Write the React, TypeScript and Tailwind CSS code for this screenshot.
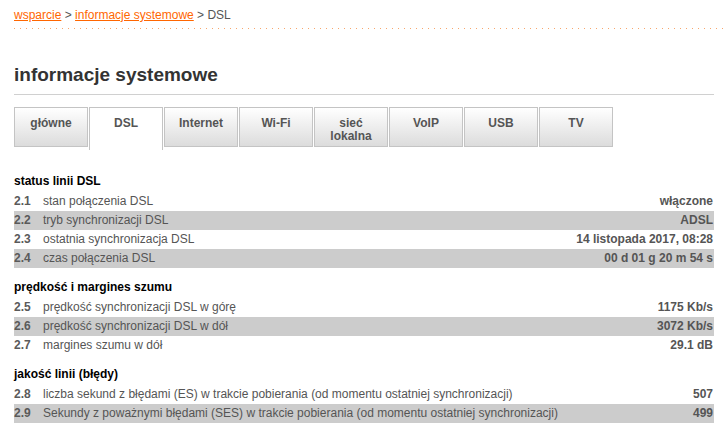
import React from 'react';

type Row = { num: string; label: string; value: string };

const sections: { title: string; rows: Row[] }[] = [
  {
    title: 'status linii DSL',
    rows: [
      { num: '2.1', label: 'stan połączenia DSL', value: 'włączone' },
      { num: '2.2', label: 'tryb synchronizacji DSL', value: 'ADSL' },
      { num: '2.3', label: 'ostatnia synchronizacja DSL', value: '14 listopada 2017, 08:28' },
      { num: '2.4', label: 'czas połączenia DSL', value: '00 d 01 g 20 m 54 s' },
    ],
  },
  {
    title: 'prędkość i margines szumu',
    rows: [
      { num: '2.5', label: 'prędkość synchronizacji DSL w górę', value: '1175 Kb/s' },
      { num: '2.6', label: 'prędkość synchronizacji DSL w dół', value: '3072 Kb/s' },
      { num: '2.7', label: 'margines szumu w dół', value: '29.1 dB' },
    ],
  },
  {
    title: 'jakość linii (błędy)',
    rows: [
      {
        num: '2.8',
        label: 'liczba sekund z błędami (ES) w trakcie pobierania (od momentu ostatniej synchronizacji)',
        value: '507',
      },
      {
        num: '2.9',
        label: 'Sekundy z poważnymi błędami (SES) w trakcie pobierania (od momentu ostatniej synchronizacji)',
        value: '499',
      },
    ],
  },
];

const tabs = ['główne', 'DSL', 'Internet', 'Wi-Fi', 'sieć lokalna', 'VoIP', 'USB', 'TV'];

export default function App() {
  return (
    <div className="w-[728px] h-[432px] overflow-hidden bg-white px-[14px] text-[12px] text-[#555] font-['Liberation_Sans',Arial,sans-serif]">
      {/* breadcrumb */}
      <div className="pt-[8px] leading-[14px]">
        <a href="#" className="text-[#ff6600] underline">wsparcie</a>
        <span> &gt; </span>
        <a href="#" className="text-[#ff6600] underline">informacje systemowe</a>
        <span> &gt; DSL</span>
      </div>
      <div className="mt-[6px] mr-[-14px] h-px bg-[repeating-linear-gradient(90deg,#f9a66b_0_1px,transparent_1px_6px)]" />

      {/* title */}
      <h1 className="mt-[35px] pb-[8px] border-b border-[#d0d0d0] text-[19px] leading-[22px] font-bold text-[#333]">
        informacje systemowe
      </h1>

      {/* tabs */}
      <div className="mt-[12px] flex items-start h-[40px]">
        {tabs.map((t) => {
          const active = t === 'DSL';
          return (
            <div
              key={t}
              className={
                active
                  ? 'w-[74px] mr-px h-[43px] border border-b-0 border-[#c4c4c4] bg-white pt-[9px] text-center font-bold leading-[13px] text-[#555]'
                  : 'w-[74px] mr-px h-[40px] border border-[#c4c4c4] bg-gradient-to-b from-white to-[#dcdcdc] pt-[9px] text-center font-bold leading-[13px] text-[#555]'
              }
            >
              {t === 'sieć lokalna' ? (
                <>
                  sieć
                  <br />
                  lokalna
                </>
              ) : (
                t
              )}
            </div>
          );
        })}
      </div>

      {/* sections */}
      <div className="mt-[25px]">
        {sections.map((s) => (
          <div key={s.title}>
            <div className="mt-[10px] mb-px h-[19px] leading-[19px] font-bold text-black">{s.title}</div>
            {s.rows.map((r, i) => (
              <div
                key={r.num}
                className={
                  i % 2 === 1
                    ? 'flex h-[19px] items-center leading-[19px] bg-[#cccccc]'
                    : 'flex h-[19px] items-center leading-[19px]'
                }
              >
                <span className="w-[29px] shrink-0 font-bold text-[#5a5a5a]">{r.num}</span>
                <span className="flex-1 whitespace-nowrap">{r.label}</span>
                <span className="pr-px font-bold text-[#555]">{r.value}</span>
              </div>
            ))}
          </div>
        ))}
      </div>
    </div>
  );
}
